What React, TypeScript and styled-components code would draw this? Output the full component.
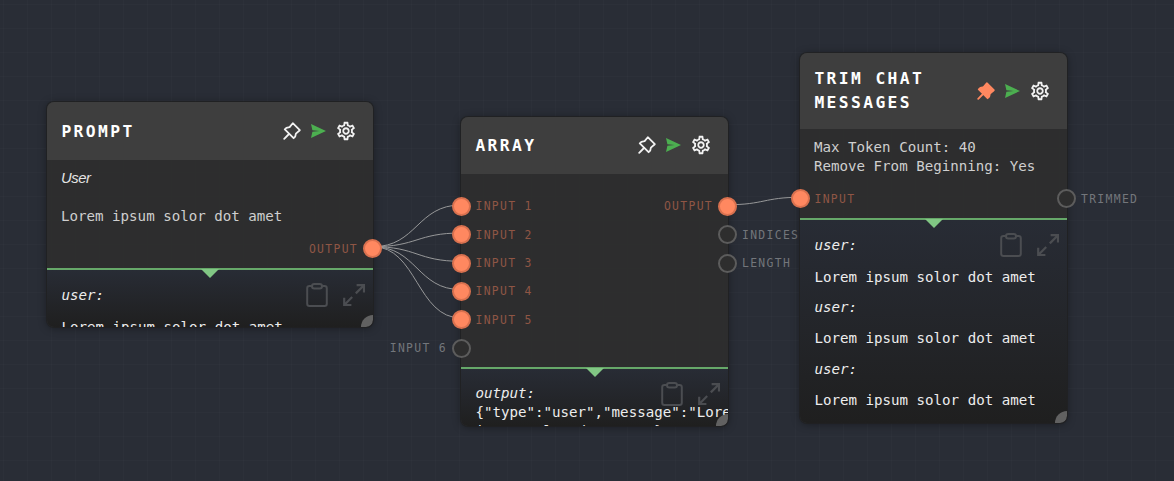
import React from "react";
import styled, { createGlobalStyle, css } from "styled-components";
import { MdOutlineSettings } from "react-icons/md";

const mono = `"DejaVu Sans Mono", "Liberation Mono", monospace`;

const GlobalStyle = createGlobalStyle`
  * { box-sizing: border-box; }
  body { margin: 0; background: #282c34; overflow: hidden; }
`;

const Canvas = styled.main`
  position: relative;
  width: 1174px;
  height: 481px;
  overflow: hidden;
  background-color: #292d36;
  background-image:
    linear-gradient(to right, rgba(255, 255, 255, 0.015) 1px, transparent 1px),
    linear-gradient(to bottom, rgba(255, 255, 255, 0.015) 1px, transparent 1px);
  background-size: 24px 24px;
  background-position: 3px 4px;
  font-family: ${mono};
`;

const Wires = styled.svg`
  position: absolute;
  inset: 0;
  width: 1174px;
  height: 481px;
  fill: none;
  stroke: #979899;
  stroke-width: 1;
`;

const Node = styled.article<{ $x: number; $y: number; $w: number; $h: number }>`
  position: absolute;
  left: ${(p) => p.$x}px;
  top: ${(p) => p.$y}px;
  width: ${(p) => p.$w}px;
  height: ${(p) => p.$h}px;
  display: flex;
  flex-direction: column;
  border-radius: 7px;
  background: rgba(46, 46, 46, 0.94);
  box-shadow: 0 0 0 1px rgba(32, 32, 32, 0.75), 0 1px 8px rgba(0, 0, 0, 0.4);
`;

const Header = styled.header<{ $h: number }>`
  flex: none;
  display: flex;
  align-items: center;
  justify-content: space-between;
  height: ${(p) => p.$h}px;
  padding: 1px 18.5px 0 14.4px;
  border-radius: 7px 7px 0 0;
  background: #3e3e3e;
`;

const Title = styled.h2`
  margin: 0;
  color: #fff;
  font-size: 16.3px;
  font-weight: 700;
  line-height: 24px;
  letter-spacing: 2.4px;
`;

const Actions = styled.div`
  flex: none;
  display: flex;
  align-items: center;
  gap: 10px;
  margin-top: -1px;
  color: #f2f2f2;
  svg { display: block; }
`;

const Gear = styled(MdOutlineSettings)`
  margin: 0 -2px 0 -1.5px;
`;

const Body = styled.div<{ $top: number }>`
  flex: none;
  display: flex;
  flex-direction: column;
  padding: ${(p) => p.$top}px 0 5px;
`;

const Text = styled.p`
  margin: 0 14px 8.6px;
  color: #cfcfcf;
  font-size: 14.15px;
  line-height: 19px;
  white-space: pre;
`;

const Role = styled.em`
  color: #e4e4e4;
  font-family: "Liberation Sans", Arial, sans-serif;
  font-size: 14.8px;
  letter-spacing: -0.4px;
`;

const Ports = styled.div`
  display: flex;
  justify-content: space-between;
  margin: 0 -9px 0 -9.5px;
`;

const PortColumn = styled.div`
  display: flex;
  flex-direction: column;
`;

const PortRow = styled.div<{ $side: "in" | "out"; $on: boolean }>`
  display: flex;
  align-items: center;
  gap: 5px;
  height: 28.4px;
  width: 86px;
  flex-direction: ${(p) => (p.$side === "in" ? "row" : "row-reverse")};
  ${(p) =>
    !p.$on &&
    css`
      flex-direction: ${p.$side === "in" ? "row-reverse" : "row"};
      margin-left: ${p.$side === "in" ? "-67px" : "67px"};
      margin-right: ${p.$side === "in" ? "0" : "-67px"};
    `}
`;

const Dot = styled.i<{ $on: boolean }>`
  flex: none;
  width: 19px;
  height: 19px;
  border-radius: 50%;
  border: 2px solid ${(p) => (p.$on ? "#d9714f" : "#5c5c5c")};
  background: ${(p) => (p.$on ? "#ff8860" : "#2e2e2e")};
`;

const PortLabel = styled.span<{ $side: "in" | "out"; $on: boolean }>`
  color: ${(p) => (p.$on ? "#8f5645" : "#73767b")};
  font-size: 11.4px;
  line-height: 16px;
  letter-spacing: 1.32px;
  margin-right: ${(p) => (p.$side === "in" ? "-0.5px" : "0")};
  white-space: pre;
`;

const OutputFrame = styled.div`
  position: relative;
  flex: 1;
  min-height: 0;
  display: flex;
  flex-direction: column;
`;

const Output = styled.section<{ $top: number }>`
  position: relative;
  flex: 1;
  min-height: 0;
  overflow: hidden;
  padding: ${(p) => p.$top}px 0 0 14.4px;
  border-top: 2px solid #66a869;
  border-radius: 0 0 7px 7px;
  background: linear-gradient(#282c35, #1f1f1f);
  color: #ededed;
  font-size: 14.15px;
  line-height: 19px;
  white-space: pre;
`;

const Marker = styled.i`
  position: absolute;
  z-index: 1;
  top: 1px;
  left: calc(50% - 9px);
  border: 9px solid transparent;
  border-top-color: #81c784;
  border-bottom: 0;
`;

const Tools = styled.div`
  position: absolute;
  top: 13px;
  right: 8px;
  display: flex;
  gap: 15.5px;
  color: #4b4d51;
`;

const Grip = styled.i`
  position: absolute;
  right: 0;
  bottom: 0;
  width: 12px;
  height: 12px;
  border-radius: 12px 0 7px 0;
  background: #616161;
`;

const Entry = styled.p`
  position: relative;
  margin: 0;
`;

const Json = styled(Entry)`
  line-height: 18.7px;
`;

const Speaker = styled(Entry)`
  font-style: italic;
`;

const Message = styled(Entry)`
  margin: 12.6px 0 11.1px;
`;

const Pin = ({ active = false }: { active?: boolean }) => (
  <svg width="18" height="18" viewBox="0 0 18 18" fill={active ? "#ff8860" : "none"}
    stroke={active ? "#ff8860" : "currentColor"} strokeWidth="1.8" strokeLinecap="round" strokeLinejoin="round">
    <path d="M9.8 1.2L16.8 8.2L12.9 11.6L12.2 14.6L10.6 16.2L1.8 7.4L3.4 5.8L6.6 5.1Z" />
    <path d="M6 12L1.2 16.8" />
  </svg>
);

const Send = () => (
  <svg width="15" height="14" viewBox="0 0 15 14" fill="#4caf50">
    <path d="M0 0L15 7L0 14L1.4 7.8L8.6 7L1.4 6.2Z" />
  </svg>
);

const Clipboard = () => (
  <svg width="22" height="24" viewBox="0 0 22 24" fill="none" stroke="currentColor" strokeWidth="2">
    <path d="M6 3H3.5A2.3 2.3 0 0 0 1.2 5.3V20.7A2.3 2.3 0 0 0 3.5 23H18.5A2.3 2.3 0 0 0 20.8 20.7V5.3A2.3 2.3 0 0 0 18.5 3H16" />
    <rect x="6" y="1" width="10" height="4.6" rx="2.3" />
  </svg>
);

const Expand = () => (
  <svg width="22" height="24" viewBox="0 0 22 24" fill="none" stroke="currentColor" strokeWidth="2.2">
    <path d="M12.8 10.4L20.5 2.7M13.6 2.2H21V9.4M9.2 14L1.5 21.7M1.2 14.8V22H8.4" />
  </svg>
);

const NodeHeader = ({ height, pinned, children }: { height: number; pinned?: boolean; children: React.ReactNode }) => (
  <Header $h={height}>
    <Title>{children}</Title>
    <Actions>
      <Pin active={pinned} />
      <Send />
      <Gear size={22} />
    </Actions>
  </Header>
);

const Port = ({ side, on = false, label }: { side: "in" | "out"; on?: boolean; label: string }) => (
  <PortRow $side={side} $on={on}>
    <Dot $on={on} />
    <PortLabel $side={side} $on={on}>{label}</PortLabel>
  </PortRow>
);

const OutputPanel = ({ top = 16, children }: { top?: number; children: React.ReactNode }) => (
  <OutputFrame>
    <Marker />
    <Output $top={top}>
      <Tools>
        <Clipboard />
        <Expand />
      </Tools>
      {children}
      <Grip />
    </Output>
  </OutputFrame>
);

const lorem = "Lorem ipsum solor dot amet";
const wireEnds = [205, 233, 261.3, 289.6, 318];

export default function App() {
  return (
    <>
      <GlobalStyle />
      <Canvas>
        <Wires viewBox="0 0 1174 481">
          {wireEnds.map((y) => (
            <path key={y} d={`M373 246.7C417 246.7 417 ${y} 461 ${y}`} />
          ))}
          <path d="M728 204.7C764 204.7 764 197.3 800 197.3" />
        </Wires>

        <Node $x={47} $y={102} $w={326} $h={224.5}>
          <NodeHeader height={58}>PROMPT</NodeHeader>
          <Body $top={9}>
            <Text>
              <Role>User</Role>
              {"\n\n" + lorem}
            </Text>
            <Ports>
              <PortColumn />
              <PortColumn>
                <Port side="out" on label="OUTPUT" />
              </PortColumn>
            </Ports>
          </Body>
          <OutputPanel>
            <Speaker>user:</Speaker>
            <Message>{lorem}</Message>
          </OutputPanel>
        </Node>

        <Node $x={461} $y={117} $w={267} $h={309}>
          <NodeHeader height={56.5}>ARRAY</NodeHeader>
          <Body $top={18.6}>
            <Ports>
              <PortColumn>
                {[1, 2, 3, 4, 5, 6].map((n) => (
                  <Port key={n} side="in" on={n < 6} label={`INPUT ${n}`} />
                ))}
              </PortColumn>
              <PortColumn>
                <Port side="out" on label="OUTPUT" />
                <Port side="out" label="INDICES" />
                <Port side="out" label="LENGTH" />
              </PortColumn>
            </Ports>
          </Body>
          <OutputPanel top={15}>
            <Speaker>output:</Speaker>
            <Json>{'{"type":"user","message":"Lorem\nipsum solor dot amet"}'}</Json>
          </OutputPanel>
        </Node>

        <Node $x={800} $y={53} $w={267} $h={370}>
          <NodeHeader height={75.5} pinned>
            TRIM CHAT
            <br />
            MESSAGES
          </NodeHeader>
          <Body $top={9.7}>
            <Text>{"Max Token Count: 40\nRemove From Beginning: Yes"}</Text>
            <Ports>
              <PortColumn>
                <Port side="in" on label="INPUT" />
              </PortColumn>
              <PortColumn>
                <Port side="out" label="TRIMMED" />
              </PortColumn>
            </Ports>
          </Body>
          <OutputPanel>
            {[0, 1, 2].map((i) => (
              <React.Fragment key={i}>
                <Speaker>user:</Speaker>
                <Message>{lorem}</Message>
              </React.Fragment>
            ))}
          </OutputPanel>
        </Node>
      </Canvas>
    </>
  );
}
